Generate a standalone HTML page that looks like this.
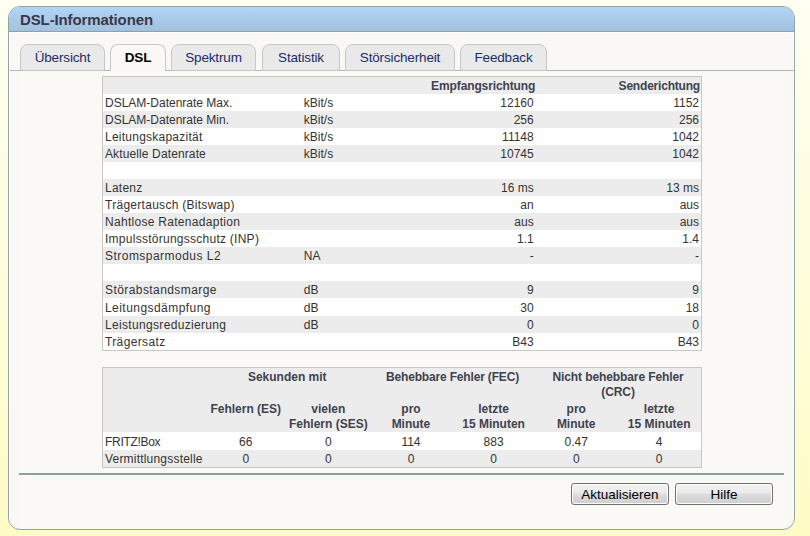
<!DOCTYPE html>
<html><head><meta charset="utf-8">
<style>
*{box-sizing:border-box;margin:0;padding:0}
html,body{width:810px;height:536px;overflow:hidden}
body{position:relative;background:linear-gradient(#fffff2,#fffcc6);font-family:"Liberation Sans",sans-serif;color:#333}
.panel{position:absolute;left:8px;top:6px;width:787px;height:524px;border:1px solid #8fa5a5;border-radius:12px;background:#f9f8f4;box-shadow:inset 1px 0 0 #fdfdf9,inset -1px 0 0 #fdfdf9;overflow:hidden}
.content{position:absolute;left:19px;top:71px;width:765px;height:457px;background:#faf9f5}
.hdr{position:absolute;left:0;top:0;right:0;height:25px;border-bottom:1px solid #8ea2a6;box-shadow:0 1px 0 #fdfdf7;background:linear-gradient(#b1d5f6,#a2c1de)}
.title{position:absolute;left:11px;top:4px;font-size:15px;letter-spacing:-0.12px;font-weight:bold;color:#3a3848;line-height:17px;white-space:nowrap}
.tabline{position:absolute;left:10px;top:70px;width:784px;height:1px;background:#b0b9b9}
.tab{position:absolute;top:44px;height:27px;border:1px solid #c4c8c8;border-radius:8px 8px 0 0;background:#e9e9e9;font-size:13.5px;letter-spacing:-0.15px;color:#1a2d66;text-align:center;line-height:15px;padding-top:5px;white-space:nowrap}
.tab.act{background:#f9f8f4;border-bottom:none;color:#000;font-weight:bold;height:27px}
table{position:absolute;border-collapse:collapse;border:1px solid #c8c8c0;font-size:12px;letter-spacing:0px;line-height:15px;table-layout:fixed}
td,th{padding:2px 2px 0 2px;white-space:nowrap;vertical-align:top}
tr.t td{padding-top:3px}
th{font-weight:bold;color:#40424e}
tr.g{background:#ececec}
tr.w{background:#fff}
.r{text-align:right}
.c{text-align:center}
#t1{left:102px;top:76px;width:600px}
#t2{left:102px;top:367px;width:600px}
.sep{position:absolute;left:19px;top:473px;width:765px;height:2px;background:#88a2a2}
.btn{position:absolute;top:483px;width:98px;height:22px;border:1px solid #707070;border-radius:3px;background:linear-gradient(#f2f2f2 0%,#ebebeb 45%,#dddddd 50%,#cfcfcf 100%);box-shadow:inset 0 0 0 1px #fcfcfc;font-size:13.5px;color:#000;text-align:center;line-height:15px;padding-top:3px}
</style></head><body>
<div class="panel">
  <div class="hdr"><div class="title">DSL-Informationen</div></div>
</div>
<div class="content"></div>
<div class="tabline"></div>
<div class="tab" style="left:20px;width:85px">Übersicht</div>
<div class="tab act" style="left:110px;width:56px">DSL</div>
<div class="tab" style="left:171px;width:85px">Spektrum</div>
<div class="tab" style="left:262px;width:78px">Statistik</div>
<div class="tab" style="left:345px;width:110px">Störsicherheit</div>
<div class="tab" style="left:460px;width:87px">Feedback</div>

<table id="t1">
<colgroup><col style="width:199px"><col style="width:100px"><col style="width:133.5px"><col style="width:165.5px"></colgroup>
<tr class="g"><th></th><th></th><th class="r" style="padding-right:0.5px;letter-spacing:-0.12px">Empfangsrichtung</th><th class="r" style="padding-right:1px;letter-spacing:-0.2px">Senderichtung</th></tr>
<tr class="w"><td>DSLAM-Datenrate Max.</td><td>kBit/s</td><td class="r">12160</td><td class="r">1152</td></tr>
<tr class="g"><td>DSLAM-Datenrate Min.</td><td>kBit/s</td><td class="r">256</td><td class="r">256</td></tr>
<tr class="w"><td style="letter-spacing:0.24px">Leitungskapazität</td><td>kBit/s</td><td class="r">11148</td><td class="r">1042</td></tr>
<tr class="g"><td style="letter-spacing:0.12px">Aktuelle Datenrate</td><td>kBit/s</td><td class="r">10745</td><td class="r">1042</td></tr>
<tr class="w"><td>&nbsp;</td><td></td><td></td><td></td></tr>
<tr class="g"><td style="letter-spacing:0.24px">Latenz</td><td></td><td class="r">16 ms</td><td class="r">13 ms</td></tr>
<tr class="w"><td style="letter-spacing:0.28px">Trägertausch (Bitswap)</td><td></td><td class="r">an</td><td class="r">aus</td></tr>
<tr class="g"><td style="letter-spacing:0.29px">Nahtlose Ratenadaption</td><td></td><td class="r">aus</td><td class="r">aus</td></tr>
<tr class="w"><td style="letter-spacing:0.26px">Impulsstörungsschutz (INP)</td><td></td><td class="r">1.1</td><td class="r">1.4</td></tr>
<tr class="g"><td style="letter-spacing:0.47px">Stromsparmodus L2</td><td>NA</td><td class="r">-</td><td class="r">-</td></tr>
<tr class="w"><td>&nbsp;</td><td></td><td></td><td></td></tr>
<tr class="g"><td style="letter-spacing:0.42px">Störabstandsmarge</td><td>dB</td><td class="r">9</td><td class="r">9</td></tr>
<tr class="w t"><td style="letter-spacing:0.45px">Leitungsdämpfung</td><td>dB</td><td class="r">30</td><td class="r">18</td></tr>
<tr class="g"><td style="letter-spacing:0.33px">Leistungsreduzierung</td><td>dB</td><td class="r">0</td><td class="r">0</td></tr>
<tr class="w"><td style="letter-spacing:0.37px">Trägersatz</td><td></td><td class="r">B43</td><td class="r">B43</td></tr>
</table>

<table id="t2">
<colgroup><col style="width:102px"><col style="width:82px"><col style="width:83px"><col style="width:82px"><col style="width:83px"><col style="width:82px"><col style="width:84px"></colgroup>
<tr class="g"><th></th><th colspan="2" class="c">Sekunden mit<br>&nbsp;</th><th colspan="2" class="c" style="letter-spacing:-0.17px">Behebbare Fehler (FEC)</th><th colspan="2" class="c" style="letter-spacing:-0.1px">Nicht behebbare Fehler<br>(CRC)</th></tr>
<tr class="g"><th></th><th class="c">Fehlern (ES)</th><th class="c">vielen<br>Fehlern (SES)</th><th class="c">pro<br>Minute</th><th class="c">letzte<br>15 Minuten</th><th class="c">pro<br>Minute</th><th class="c">letzte<br>15 Minuten</th></tr>
<tr class="w t"><td style="letter-spacing:-0.3px">FRITZ!Box</td><td class="c">66</td><td class="c">0</td><td class="c">114</td><td class="c">883</td><td class="c">0.47</td><td class="c">4</td></tr>
<tr class="g"><td style="letter-spacing:0.2px">Vermittlungsstelle</td><td class="c">0</td><td class="c">0</td><td class="c">0</td><td class="c">0</td><td class="c">0</td><td class="c">0</td></tr>
</table>

<div class="sep"></div>
<div class="btn" style="left:571px">Aktualisieren</div>
<div class="btn" style="left:675px">Hilfe</div>
</body></html>
